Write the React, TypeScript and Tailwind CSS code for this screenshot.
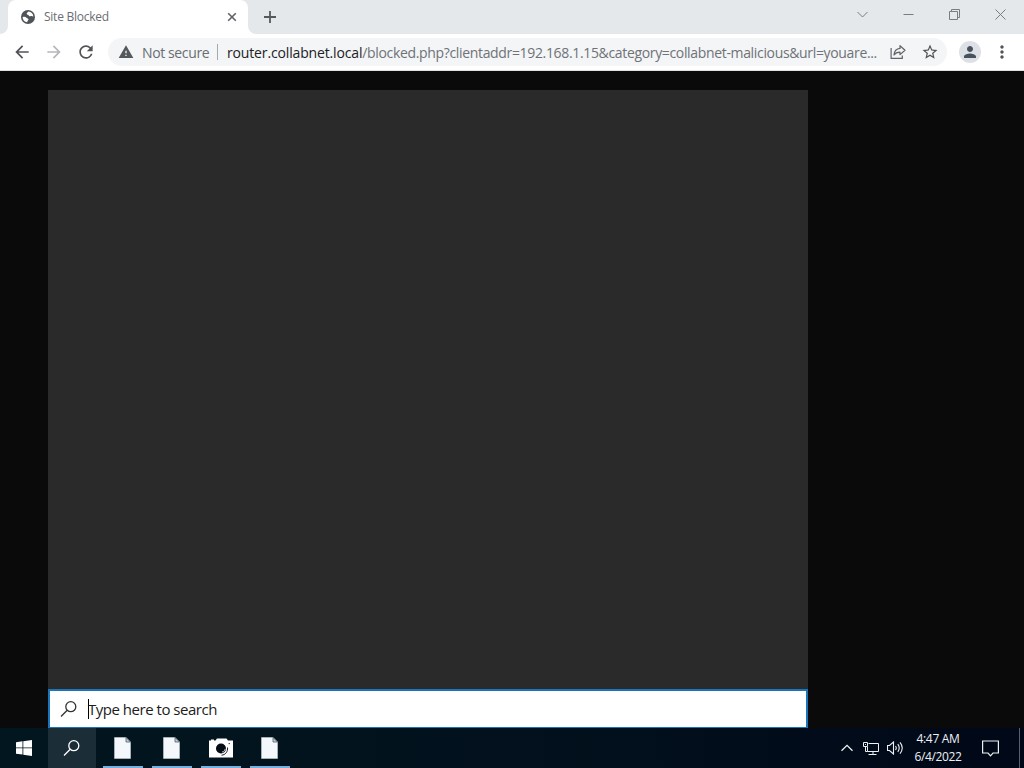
import type { ReactNode } from 'react'
import {
  MdArrowBack,
  MdArrowForward,
  MdMoreVert,
  MdPerson,
  MdRefresh,
  MdStarBorder,
  MdWarning,
} from 'react-icons/md'

function GlobeIcon() {
  return (
    <svg width="14" height="14" viewBox="0 0 14 14">
      <circle cx="7" cy="7" r="7" fill="#505357" />
      <path
        d="M1.6 7.2C3 6.6 4.8 6.8 5.5 7.8C6.2 8.8 7.6 8.4 7.5 9.6C7.4 10.6 6.3 10.6 6.2 12.3C3.6 12 1.6 9.8 1.6 7.2Z"
        fill="#fff"
      />
      <path
        d="M7.4 1.6C6.8 2.6 5.6 2.8 5.8 3.9C6 4.8 7.3 4.3 7.6 5.2C7.9 6.2 9 6.7 9.8 6.1C10.6 5.6 11.4 6.4 12.4 6.5C12.2 3.8 10 1.7 7.4 1.6Z"
        fill="#fff"
      />
    </svg>
  )
}

function ShareIcon() {
  return (
    <svg
      className="shrink-0"
      width="16"
      height="16"
      viewBox="0 0 16 16"
      fill="none"
      stroke="#5f6368"
      strokeWidth="1.2"
    >
      <path d="M1.1 4V14.4H12.3V11.6" />
      <path d="M10 1.7L15 6.3L10 10.6V8.2C7.2 8.2 5.4 8.9 4 11C4.3 7.4 6.4 4.7 10 4.4Z" strokeLinejoin="round" />
    </svg>
  )
}

function SearchIcon({ color }: { color: string }) {
  return (
    <svg width="18" height="18" viewBox="0 0 18 18" fill="none" stroke={color} strokeWidth="1.3">
      <circle cx="10.8" cy="6.7" r="5" />
      <path d="M7.2 10.3L1 16.5" />
    </svg>
  )
}

function FileIcon() {
  return (
    <svg className="mr-px" width="17" height="22" viewBox="0 0 17 22">
      <path d="M0.5 0.5H12L16.5 5V21.5H0.5Z" fill="#f4f7fb" stroke="#c3ccd3" strokeWidth="0.6" />
      <path d="M12 0.5V5H16.5Z" fill="#c5d0d6" stroke="#4d6068" strokeWidth="0.8" />
    </svg>
  )
}

function CameraIcon() {
  return (
    <svg width="24" height="20" viewBox="0 0 24 20">
      <path d="M0 2.5H2V1.5H5V2.5H6.5L8 0.5H17.5L19 2.5H24V19.5H0Z" fill="#fff" />
      <circle cx="12" cy="10.5" r="5" fill="#050d14" />
      <path d="M18.5 9.5C19 13.5 16.5 17 12.5 17.2" fill="none" stroke="#111c22" strokeWidth="1" />
      <circle cx="20.2" cy="5.6" r="0.7" fill="#111c22" />
      <path d="M13 14C15 13.8 16 12.5 16.2 10.8" fill="none" stroke="#fff" strokeWidth="0.7" />
    </svg>
  )
}

function WindowControls() {
  return (
    <div className="mr-px flex h-7 text-[#797c80]">
      <div className="flex w-[46px] items-center justify-center">
        <svg width="11" height="11" viewBox="0 0 11 11" fill="none" stroke="currentColor">
          <path d="M0.5 3L5.5 8L10.5 3" />
        </svg>
      </div>
      <div className="flex w-[46px] items-center justify-center">
        <svg width="11" height="11" viewBox="0 0 11 11" fill="none" stroke="currentColor">
          <path d="M0.5 5.5H10.5" />
        </svg>
      </div>
      <div className="flex w-[46px] items-center justify-center">
        <svg width="11" height="11" viewBox="0 0 11 11" fill="none" stroke="currentColor">
          <path d="M0.5 2.5H8.5V10.5H0.5ZM2.5 2.5V0.5H10.5V8.5H8.5" />
        </svg>
      </div>
      <div className="flex w-[46px] items-center justify-center">
        <svg width="11" height="11" viewBox="0 0 11 11" fill="none" stroke="currentColor">
          <path d="M0.5 0.5L10.5 10.5M10.5 0.5L0.5 10.5" />
        </svg>
      </div>
    </div>
  )
}

function TabStrip() {
  return (
    <div className="flex h-[34px] bg-white">
      <div className="w-2 rounded-br-lg bg-[#e5e8eb]" />
      <div className="w-60 bg-[#e5e8eb]">
        <div className="flex h-[34px] items-center rounded-t-lg bg-white pl-[13px]">
          <GlobeIcon />
          <span className="ml-[9px] w-[183px] text-xs tracking-[-0.25px] text-[#6a6d71]">Site Blocked</span>
          <svg width="10" height="10" viewBox="0 0 10 10" stroke="#5f6368" strokeWidth="1.6">
            <path d="M1.2 1.2L8.8 8.8M8.8 1.2L1.2 8.8" />
          </svg>
        </div>
      </div>
      <div className="flex flex-1 justify-between rounded-bl-lg bg-[#e5e8eb]">
        <svg
          className="mt-[11px] ml-4"
          width="12"
          height="12"
          viewBox="0 0 12 12"
          stroke="#55595d"
          strokeWidth="1.8"
        >
          <path d="M6 0V12M0 6H12" />
        </svg>
        <WindowControls />
      </div>
    </div>
  )
}

function Toolbar() {
  return (
    <div className="flex h-[37px] items-center border-b border-[#dfe1e4] bg-white pl-3">
      <MdArrowBack size={20} color="#505357" />
      <MdArrowForward className="ml-3" size={20} color="#b5b7ba" />
      <MdRefresh className="ml-3" size={20} color="#505357" />
      <div className="ml-3 flex h-7 w-[839px] items-center rounded-full bg-[#f3f5f6] pl-[10px] text-sm whitespace-nowrap">
        <MdWarning className="shrink-0" size={16} color="#55595d" />
        <span className="ml-2 w-[67px] pt-px tracking-[-0.38px] text-[#6a6d71]">Not secure</span>
        <div className="ml-2 h-4 w-px bg-[#a5a8ac]" />
        <span className="ml-[9px] w-[663px] pt-px text-[#6f7276]">
          <span className="tracking-[-0.15px] text-[#202124]">router.collabnet.local</span>
          <span className="tracking-[-0.34px]">
            /blocked.php?clientaddr=192.168.1.15&amp;category=collabnet-malicious&amp;url=youare...
          </span>
        </span>
        <ShareIcon />
        <MdStarBorder className="ml-[15px] shrink-0" size={18} color="#505357" />
      </div>
      <div className="ml-3 flex size-[22px] items-center justify-center rounded-full bg-[#dde1e5]">
        <MdPerson size={18} color="#46535e" />
      </div>
      <MdMoreVert className="ml-[11px]" size={20} color="#505357" />
    </div>
  )
}

function SearchPanel() {
  return (
    <div className="mt-[19px] ml-12 flex w-[760px] flex-col bg-[#2a2a2a]">
      <div className="flex-1" />
      <div className="flex h-[39px] items-center border-2 border-b border-[#1b75bb] bg-white pl-[10px]">
        <SearchIcon color="#333" />
        <div className="ml-[10px] h-5 w-px bg-black" />
        <span className="-ml-px text-[15px] tracking-[-0.48px] text-[#1c1c1c]">Type here to search</span>
      </div>
    </div>
  )
}

function TaskButton({ children }: { children: ReactNode }) {
  return (
    <div className="flex h-full w-10 flex-col items-center border-b-2 border-[#76b0e0]">
      <div className="flex flex-1 items-center justify-center pt-[2px]">{children}</div>
    </div>
  )
}

function Tray() {
  return (
    <div className="ml-auto flex items-center text-[#eef1f4]">
      <svg width="12" height="8" viewBox="0 0 12 8" fill="none" stroke="currentColor" strokeWidth="1.3">
        <path d="M0.5 6.8L6 1.3L11.5 6.8" />
      </svg>
      <svg className="ml-[10px]" width="17" height="15" viewBox="0 0 17 15" fill="none" stroke="currentColor">
        <path d="M5.5 2.5H15.5V10.5H4.5V6M10 10.5V13.5M5.5 13.5H13.5" />
        <path d="M0.5 1.5H4.5V5.5H0.5ZM2.5 5.5V10.5H4.5M2 3.5H3" />
      </svg>
      <svg
        className="ml-[7px]"
        width="17"
        height="14"
        viewBox="0 0 17 14"
        fill="none"
        stroke="currentColor"
        strokeWidth="1.1"
      >
        <path d="M0.5 4.5H2.5L6.5 1V13L2.5 9.5H0.5Z" />
        <path d="M8.5 5Q10 7 8.5 9M10.8 3.2Q13.6 7 10.8 10.8M13 1.4Q17.5 7 13 12.6" />
      </svg>
      <div className="ml-[6px] flex w-[56px] flex-col items-center text-xs leading-[18px] whitespace-nowrap">
        <span className="tracking-[-0.3px]">4:47 AM</span>
        <span className="tracking-[-0.4px]">6/4/2022</span>
      </div>
      <svg className="ml-4" width="17" height="17" viewBox="0 0 17 17" fill="none" stroke="currentColor" strokeWidth="1.2">
        <path d="M0.6 1H16.4V13H11L8.5 15.8L6 13H0.6Z" />
      </svg>
      <div className="ml-[20px] h-10 w-px bg-[#59606c]" />
      <div className="w-1" />
    </div>
  )
}

function Taskbar() {
  return (
    <div className="flex h-10 bg-linear-to-r from-[#02161f] via-[#02111d] to-[#010817]">
      <div className="flex w-12 items-center justify-center">
        <svg width="16" height="16" viewBox="0 0 16 16" fill="#fff">
          <path d="M0 2.2L6.5 1.3V7.5H0ZM7.3 1.2L16 0V7.5H7.3ZM0 8.3H6.5V14.6L0 13.7ZM7.3 8.3H16V16L7.3 14.7Z" />
        </svg>
      </div>
      <div className="flex w-12 items-center justify-center bg-[#1b2d36]">
        <SearchIcon color="#fff" />
      </div>
      <div className="ml-[7px] flex gap-[9px]">
        <TaskButton>
          <FileIcon />
        </TaskButton>
        <TaskButton>
          <FileIcon />
        </TaskButton>
        <TaskButton>
          <CameraIcon />
        </TaskButton>
        <TaskButton>
          <FileIcon />
        </TaskButton>
      </div>
      <Tray />
    </div>
  )
}

export default function App() {
  return (
    <div className="flex h-screen w-full flex-col overflow-hidden bg-[#0a0a0a] font-['Open_Sans','Noto_Sans',sans-serif]">
      <TabStrip />
      <Toolbar />
      <div className="flex flex-1">
        <SearchPanel />
      </div>
      <Taskbar />
    </div>
  )
}
